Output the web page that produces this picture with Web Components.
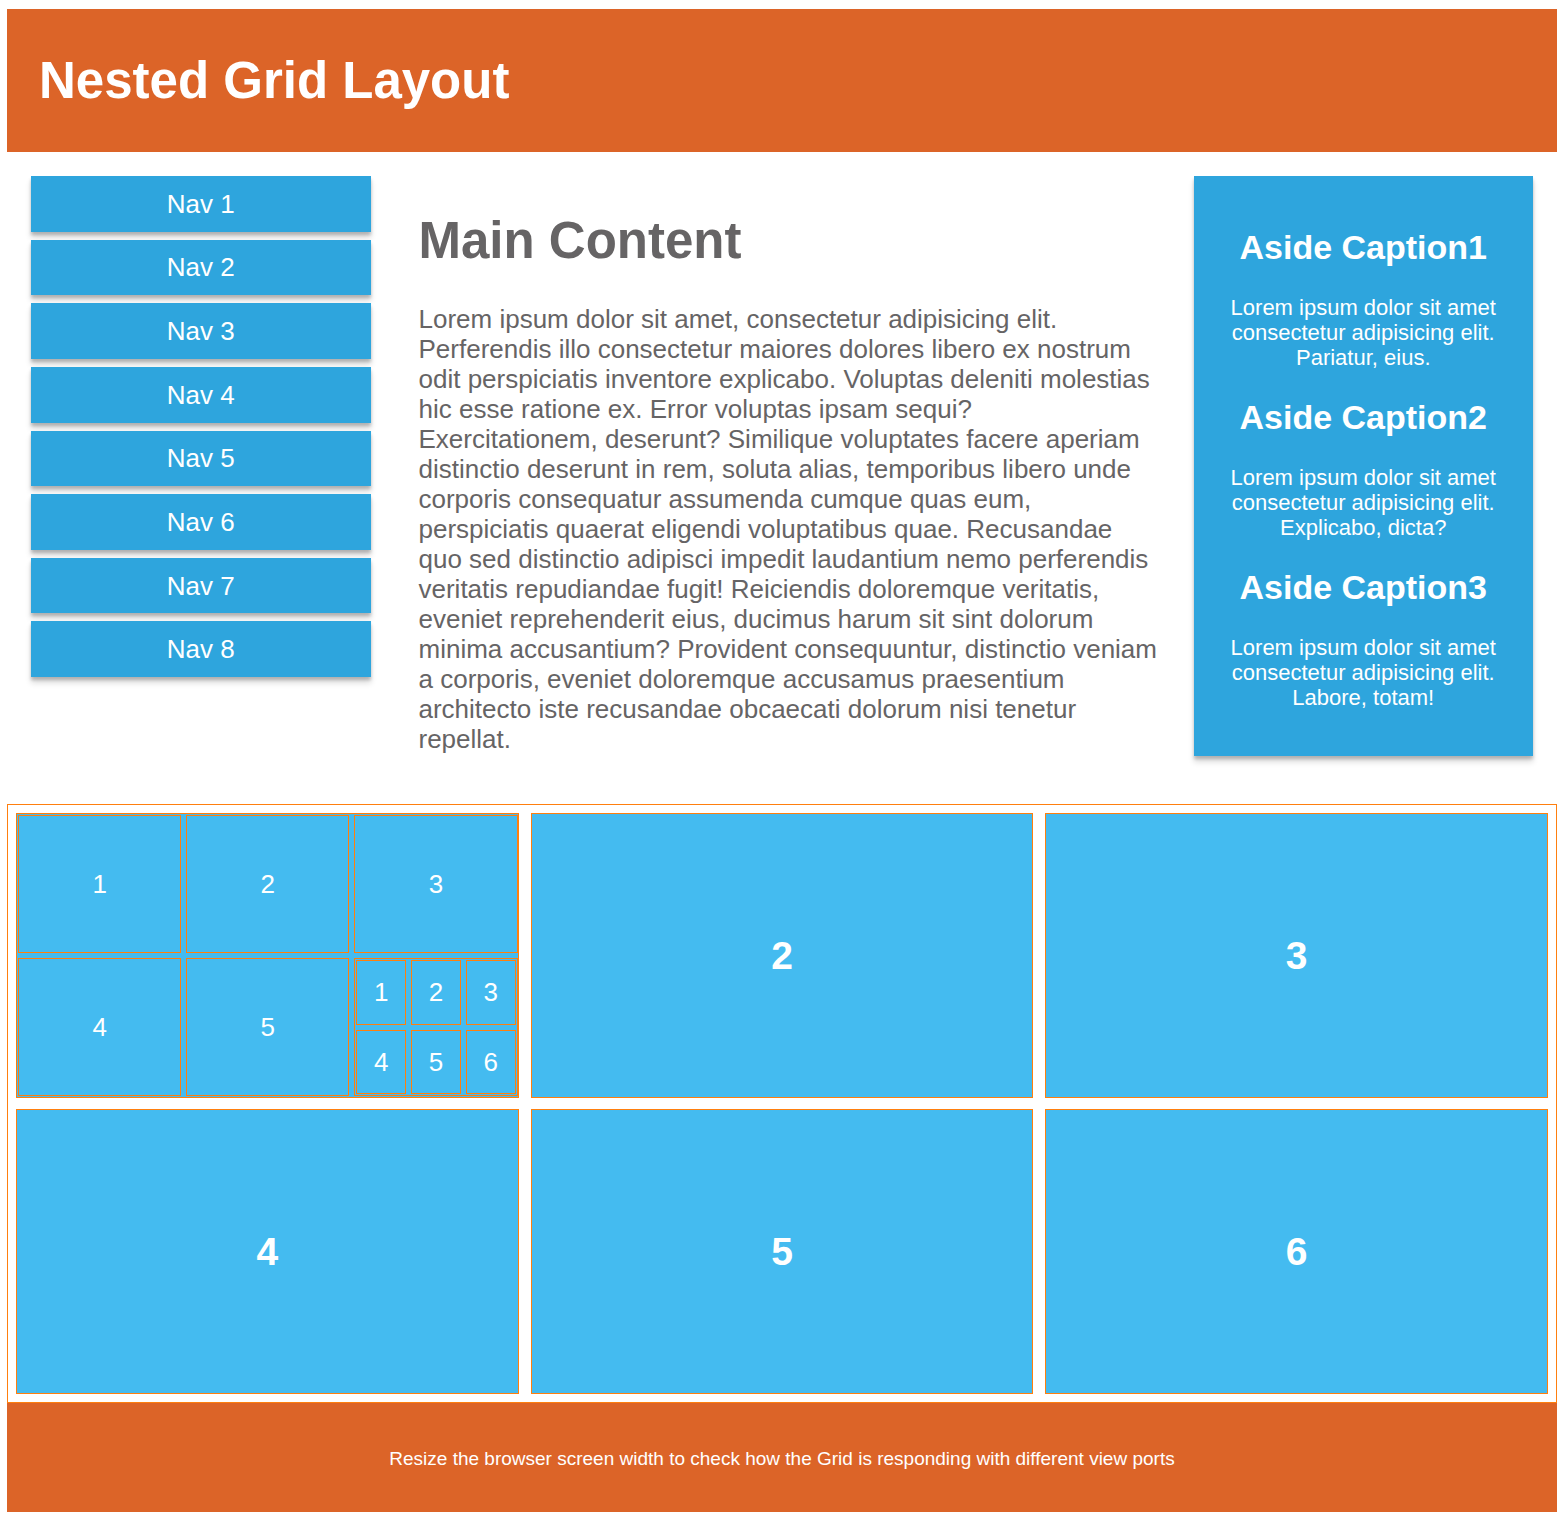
<!DOCTYPE html>
<html lang="en">
<head>
<meta charset="utf-8">
<meta name="viewport" content="width=device-width, initial-scale=1">
<title>Nested Grid Layout</title>
<style>
  :root {
    --orange: #dc6428;
    --line: #ff7f0e;
    --blue: #2ea5dd;
    --sky: #44bbf0;
    --ink: #666465;
    --shadow: 0 3px 3px rgba(0,0,0,.2), 0 6px 6px rgba(0,0,0,.14);
  }
  body {
    margin: 9px 7px;
    background: #fff;
    font: 26px/30px "Liberation Sans", Arial, sans-serif;
    color: var(--ink);
  }
</style>
</head>
<body>
<grid-page></grid-page>
<script>
const define = (name, html) => {
  const template = document.createElement('template');
  template.innerHTML = html;
  customElements.define(name, class extends HTMLElement {
    constructor() {
      super();
      this.attachShadow({ mode: 'open' }).append(template.content.cloneNode(true));
    }
  });
};

define('page-header', `
<style>
  :host { display: block; }
  header { background: var(--orange); color: #fff; padding: 42px 32px; }
  h1 { margin: 0; font-size: 51px; line-height: 59px; }
</style>
<header><h1><slot></slot></h1></header>`);

define('side-nav', `
<style>
  :host { display: block; padding: 24px; }
  nav { display: grid; grid-auto-rows: 1fr; gap: 8px; height: 501px; }
  ::slotted(a) {
    display: flex; align-items: center; justify-content: center;
    background: var(--blue); color: #fff; text-decoration: none;
    box-shadow: var(--shadow);
  }
</style>
<nav aria-label="Sections"><slot></slot></nav>`);

define('main-article', `
<style>
  :host { display: block; padding: 24px 12px 24px 24px; }
  h1 { margin: 35px 0 34px; font-size: 51px; line-height: 59px; }
  p { margin: 0 0 26px; }
</style>
<main><h1><slot name="title"></slot></h1><p><slot></slot></p></main>`);

define('side-panel', `
<style>
  :host { display: block; padding: 24px; }
  aside { background: var(--blue); color: #fff; text-align: center; padding: 52px 24px 46px; box-shadow: var(--shadow);
    display: grid; gap: 28px; }
</style>
<aside><slot></slot></aside>`);

define('aside-caption', `
<style>
  :host { display: block; }
  h2 { margin: 0 0 28px; font-size: 34px; line-height: 39px; }
  p { margin: 0; font-size: 22px; line-height: 25px; }
</style>
<h2><slot name="title"></slot></h2><p><slot></slot></p>`);

define('cell-grid', `
<style>
  :host { display: grid; grid-template-columns: repeat(3, 1fr); grid-auto-rows: 1fr;
    box-sizing: border-box; border: 1px solid var(--line); padding: 1px 0 1px 1px; gap: 5px;
    background: var(--sky); color: #fff; font-size: 26px; font-weight: 400; }
  :host([outer]) { padding: 8px; gap: 11px 12px; grid-auto-rows: 285px;
    background: none; font-size: 39px; font-weight: 700; }
  :host([inner]) { padding: 1px; }
</style>
<slot></slot>`);

define('grid-cell', `
<style>
  :host { display: flex; align-items: center; justify-content: center; box-sizing: border-box;
    border: 1px solid var(--line); background: var(--sky); }
</style>
<slot></slot>`);

define('page-footer', `
<style>
  :host { display: block; }
  footer { background: var(--orange); color: #fff; text-align: center; padding: 44px 24px 42px; font-size: 19px; line-height: 23px; }
</style>
<footer><slot></slot></footer>`);

define('grid-page', `
<style>
  :host { display: block; }
  .columns { display: grid; grid-template-columns: 1fr 2fr 1fr; align-items: start; }
  @media (max-width: 900px) { .columns { grid-template-columns: 1fr; } }
</style>
<page-header>Nested Grid Layout</page-header>
<div class="columns">
  <side-nav>
    <a href="#1">Nav 1</a>
    <a href="#2">Nav 2</a>
    <a href="#3">Nav 3</a>
    <a href="#4">Nav 4</a>
    <a href="#5">Nav 5</a>
    <a href="#6">Nav 6</a>
    <a href="#7">Nav 7</a>
    <a href="#8">Nav 8</a>
  </side-nav>
  <main-article><span slot="title">Main Content</span>Lorem ipsum dolor sit amet, consectetur adipisicing elit. Perferendis illo consectetur maiores dolores libero ex nostrum odit perspiciatis inventore explicabo. Voluptas deleniti molestias hic esse ratione ex. Error voluptas ipsam sequi? Exercitationem, deserunt? Similique voluptates facere aperiam distinctio deserunt in rem, soluta alias, temporibus libero unde corporis consequatur assumenda cumque quas eum, perspiciatis quaerat eligendi voluptatibus quae. Recusandae quo sed distinctio adipisci impedit laudantium nemo perferendis veritatis repudiandae fugit! Reiciendis doloremque veritatis, eveniet reprehenderit eius, ducimus harum sit sint dolorum minima accusantium? Provident consequuntur, distinctio veniam a corporis, eveniet doloremque accusamus praesentium architecto iste recusandae obcaecati dolorum nisi tenetur repellat.</main-article>
  <side-panel>
    <aside-caption><span slot="title">Aside Caption1</span>Lorem ipsum dolor sit amet consectetur adipisicing elit. Pariatur, eius.</aside-caption>
    <aside-caption><span slot="title">Aside Caption2</span>Lorem ipsum dolor sit amet consectetur adipisicing elit. Explicabo, dicta?</aside-caption>
    <aside-caption><span slot="title">Aside Caption3</span>Lorem ipsum dolor sit amet consectetur adipisicing elit. Labore, totam!</aside-caption>
  </side-panel>
</div>
<cell-grid outer>
  <cell-grid>
    <grid-cell>1</grid-cell>
    <grid-cell>2</grid-cell>
    <grid-cell>3</grid-cell>
    <grid-cell>4</grid-cell>
    <grid-cell>5</grid-cell>
    <cell-grid inner>
      <grid-cell>1</grid-cell>
      <grid-cell>2</grid-cell>
      <grid-cell>3</grid-cell>
      <grid-cell>4</grid-cell>
      <grid-cell>5</grid-cell>
      <grid-cell>6</grid-cell>
    </cell-grid>
  </cell-grid>
  <grid-cell>2</grid-cell>
  <grid-cell>3</grid-cell>
  <grid-cell>4</grid-cell>
  <grid-cell>5</grid-cell>
  <grid-cell>6</grid-cell>
</cell-grid>
<page-footer>Resize the browser screen width to check how the Grid is responding with different view ports</page-footer>`);
</script>
</body>
</html>
